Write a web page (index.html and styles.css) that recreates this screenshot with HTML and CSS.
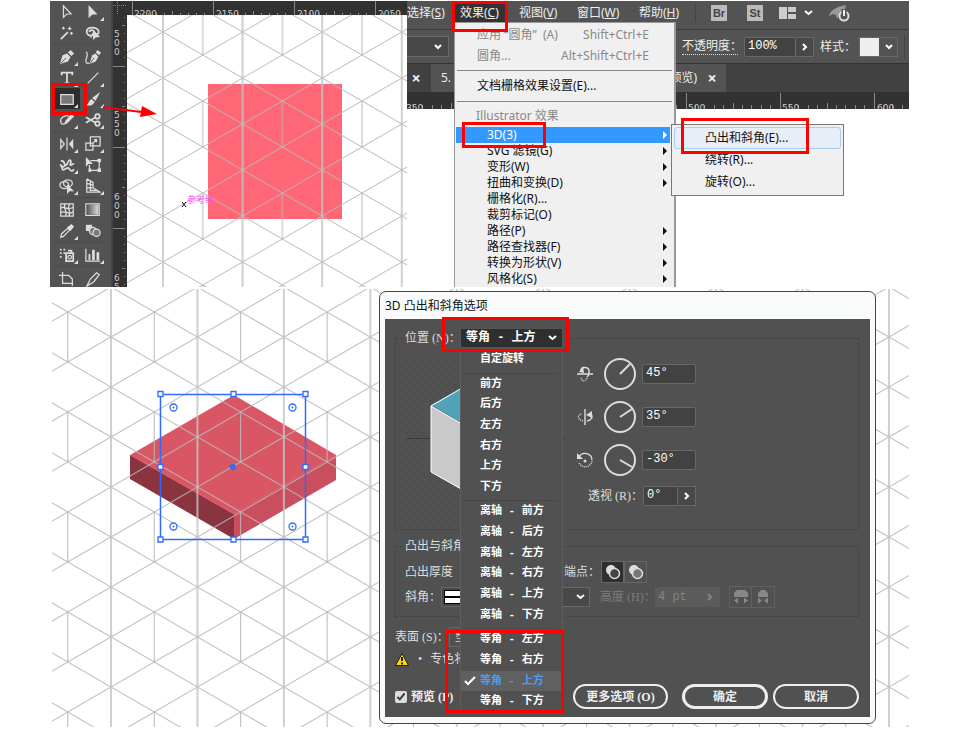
FILE: index.html
```
<!DOCTYPE html>
<html lang="zh-CN">
<head>
<meta charset="utf-8">
<title>3D 凸出和斜角</title>
<link rel="stylesheet" href="styles.css">
</head>
<body>
<main class="page">
  <section class="step step-menu">
    <div class="toolbar">
      <div class="tool-group">
        <button class="tool" aria-label="选择"><svg viewBox="0 0 18 18"><path class="line" d="M5 2v13l3.5-3.5 5-.5z"/></svg></button>
        <button class="tool more" aria-label="直接选择"><svg viewBox="0 0 18 18"><path class="fill" d="M4 1v15l4-4 6-.5z"/></svg></button>
        <button class="tool" aria-label="魔棒"><svg viewBox="0 0 18 18"><path class="thick" d="M2 16l8-8"/><path class="line" d="M12 2v4M10 4h4M5 2v3M3.500 3.500h3M14 8v3M12.500 9.500h3"/></svg></button>
        <button class="tool" aria-label="套索"><svg viewBox="0 0 18 18"><path class="thick" d="M7 12C0 12 0 3 8 3s10 7 4 8M5 8c0-3 5-3 5 0s-4 3-3 6"/><path class="fill" d="M9 5v12l3-3 5-.5z"/></svg></button>
      </div>
      <div class="tool-group">
        <button class="tool more" aria-label="钢笔"><svg viewBox="0 0 18 18"><path class="fill" d="M1 17l3-10 5-2 4 4-3 5zM10 4l3-3 4 4-3 3z"/><path class="cut" d="M2 16l6-6"/></svg></button>
        <button class="tool" aria-label="曲率"><svg viewBox="0 0 18 18"><path class="fill" d="M5 17l3-10 4-2 3 4-3 5zM12 4l2-3 4 3-2 3z"/><path class="cut" d="M6 16l4-6"/><path class="line" d="M1 3c5 3-3 10 1 13h3"/></svg></button>
        <button class="tool more" aria-label="文字"><svg viewBox="0 0 18 18"><path class="thick" d="M3 6V3h12v3M9 3v12M6 15h6"/></svg></button>
        <button class="tool more" aria-label="直线"><svg viewBox="0 0 18 18"><path class="line" d="M3 15L15 3"/></svg></button>
        <button class="tool more active" aria-label="矩形"><svg viewBox="0 0 18 18"><path class="shade" d="M2 4h14v11H2z"/><path class="line" d="M2 4h14v11H2z"/></svg></button>
        <button class="tool more" aria-label="画笔"><svg viewBox="0 0 18 18"><path class="fill" d="M17 1l-5 10-4-3zM7 9l4 3c-2 4-5 5-10 4 4-2 3-5 6-7z"/></svg></button>
        <button class="tool more" aria-label="铅笔"><svg viewBox="0 0 18 18"><path class="line" d="M7 13C2 16 0 9 4 6s6-2 7-1"/><path class="fill" d="M6 14l1-4 7-8 3 3-8 8z"/></svg></button>
        <button class="tool more" aria-label="剪刀"><svg viewBox="0 0 18 18"><circle class="thick" cx="14" cy="5" r="2.500"/><circle class="thick" cx="14" cy="13" r="2.500"/><path class="thick" d="M12 6L1 12M12 12L1 6"/></svg></button>
      </div>
      <div class="tool-group">
        <button class="tool more" aria-label="镜像"><svg viewBox="0 0 18 18"><path class="line" d="M2 4v10l4-5zM9 2v14"/><path class="fill" d="M16 3v12l-5-6z"/></svg></button>
        <button class="tool more" aria-label="比例"><svg viewBox="0 0 18 18"><path class="line" d="M6 1h11v10H6zM1 8h8v8H1zM8 9l5-5M10 4h3v3"/></svg></button>
        <button class="tool more" aria-label="变形工具"><svg viewBox="0 0 18 18"><path class="thick" d="M2 4c5 0 3 3 5 5s4-8 6-5-2 5 0 5 3-2 4-1M1 9c4 0 1 7 5 5s4-3 6 0 4 1 5 0M3 12l5-3"/></svg></button>
        <button class="tool" aria-label="自由变换"><svg viewBox="0 0 18 18"><path class="line" d="M6 4h10v11H5V9"/><path class="fill" d="M1 0v11l3-3h5zM14 2h4v4h-4zM14 13h4v4h-4zM4 13h3v4H4z"/></svg></button>
        <button class="tool more" aria-label="形状生成器"><svg viewBox="0 0 18 18"><ellipse class="line" cx="6" cy="8" rx="5" ry="4"/><ellipse class="line" cx="10" cy="6" rx="5" ry="4"/><path class="fill" d="M9 7v11l3-3h5z"/></svg></button>
        <button class="tool more" aria-label="透视网格"><svg viewBox="0 0 18 18"><path class="line" d="M2 1v15h15L9 11V5L2 1M6 4v10M2 6l7 2M2 11h7M5 14h9"/></svg></button>
      </div>
      <div class="tool-group">
        <button class="tool" aria-label="网格"><svg viewBox="0 0 18 18"><path class="line" d="M2 2h14v14H2zM2 7c5-4 6 4 14-1M2 12c5-4 8 4 14-1M7 2c-4 5 4 8 0 14M12 2c-4 6 3 9-1 14"/></svg></button>
        <button class="tool" aria-label="渐变"><svg viewBox="0 0 18 18"><defs><linearGradient id="fade"><stop offset="0" stop-color="#555"/><stop offset="1" stop-color="#ddd"/></linearGradient></defs><path class="line" d="M1 2h15v13H1z"/><path fill="url(#fade)" d="M2 3h13v11H2z"/></svg></button>
        <button class="tool more" aria-label="吸管"><svg viewBox="0 0 18 18"><path class="line" d="M2 16l1-4 7-6 2 2-7 7z"/><path class="fill" d="M9 5l5-4 3 3-4 5z"/></svg></button>
        <button class="tool" aria-label="混合"><svg viewBox="0 0 18 18"><path class="fill" d="M1 2h7v7H1z"/><circle class="disc" cx="9" cy="9" r="4"/><circle class="disc" cx="13" cy="11" r="4"/></svg></button>
      </div>
      <div class="tool-group">
        <button class="tool more" aria-label="符号喷枪"><svg viewBox="0 0 18 18"><path class="thick" d="M8 7h8v9H8zM10 4h4v3"/><circle class="line" cx="12" cy="11.500" r="2"/><path class="fill" d="M1 2h2v2H1zM5 2h2v2H5zM1 6h2v2H1zM5 6h2v2H5zM1 10h2v2H1z"/></svg></button>
        <button class="tool more" aria-label="图表"><svg viewBox="0 0 18 18"><path class="line" d="M1 2v14h16"/><path class="fill" d="M4 8h2v7H4zM8 3h3v12H8zM13 6h3v9h-3z"/></svg></button>
      </div>
      <div class="tool-group">
        <button class="tool" aria-label="画板"><svg viewBox="0 0 18 18"><path class="line" d="M4 1v13h12M0 5h11l4 4v8"/></svg></button>
        <button class="tool" aria-label="切片"><svg viewBox="0 0 18 18"><path class="line" d="M2 17l4-8 7-7 3 2-6 8z"/></svg></button>
      </div>
    </div>

    <svg class="stage" role="img" aria-label="画布">
      <defs>
        <pattern id="iso-a" x="163" y="78" width="80" height="92" patternUnits="userSpaceOnUse" patternTransform="translate(.8 0) scale(.995 1)">
          <path class="iso" d="M0 0l80 46M0 46L80 0M0 46l80 46M0 92l80-46M40 23v46"/>
          <path class="iso axis" d="M0 0v92M80 0v92"/>
        </pattern>
        <pattern id="tick-x" x="132" y="0" width="81" height="16" patternUnits="userSpaceOnUse">
          <path class="tick" d="M.500 1v15M8.500 13v3M16.500 13v3M24.500 13v3M32.500 13v3M40.500 11v5M48.500 13v3M56.500 13v3M64.500 13v3M72.500 13v3"/>
        </pattern>
        <pattern id="tick-y" x="113" y="66" width="14" height="81" patternUnits="userSpaceOnUse">
          <path class="tick" d="M0 .500h14M11 8.500h3M11 16.500h3M11 24.500h3M11 32.500h3M9 40.500h5M11 48.500h3M11 56.500h3M11 64.500h3M11 72.500h3"/>
        </pattern>
      </defs>
      <g transform="translate(-113 -1)">
        <path fill="#323232" d="M113 1h294v14H113zM113 1h14v286h-14z"/>
        <path fill="url(#tick-x)" d="M129 1h278v14H129z"/>
        <path fill="url(#tick-y)" d="M113 17h12v270h-12z"/>
        <path class="tick" stroke-dasharray="1 1" d="M117.500 1v14M113 5.500h14"/>
        <g class="ruler-text">
          <text x="134" y="17">2200</text><text x="216" y="17">2150</text><text x="297" y="17">2100</text><text x="378" y="17">2050</text>
          <text x="114" y="37">5</text><text x="114" y="46">0</text><text x="114" y="55">0</text>
          <text x="114" y="118">5</text><text x="114" y="127">5</text><text x="114" y="136">0</text>
          <text x="114" y="200">6</text><text x="114" y="209">0</text><text x="114" y="218">0</text>
          <text x="114" y="281">6</text><text x="114" y="290">5</text>
        </g>
        <path fill="#fff" d="M127 15h280v272H127z"/>
        <path fill="#ff6777" d="M208 84h134v135H208z"/>
        <path fill="url(#iso-a)" d="M127 15h280v272H127z"/>
        <path stroke="#111" fill="none" d="M182 202l4 5M186 202l-4 5"/>
        <text class="guide-text" x="187" y="203">参考线</text>
      </g>
    </svg>

    <div class="app">
      <nav class="menubar">
        <a href="#" class="m-select">选择(<u>S</u>)</a>
        <a href="#" class="m-effect">效果(<u>C</u>)</a>
        <a href="#" class="m-view">视图(<u>V</u>)</a>
        <a href="#" class="m-window">窗口(<u>W</u>)</a>
        <a href="#" class="m-help">帮助(<u>H</u>)</a>
        <span class="bar-sep"></span>
        <button class="badge">Br</button>
        <button class="badge">St</button>
        <button class="arrange" aria-label="排列文档"><svg width="34" height="12" viewBox="0 0 34 12"><path fill="#ccc" d="M0 0h8v12H0zM9 0h8v5H9zM9 7h8v5H9z"/><path class="chev" d="M26 4l3.500 3L33 4"/></svg></button>
        <button class="rocket" aria-label="GPU 性能"><svg width="22" height="18" viewBox="0 0 22 18"><path fill="#999" d="M0 12C2 5 8 3 17 1c-1 5-3 8-7 10l-2 4-1-4-3-1z"/><circle cx="15" cy="12" r="4.500" fill="#535353" stroke="#ddd" stroke-width="2"/><path stroke="#535353" stroke-width="5" d="M15 5v5"/><path stroke="#eee" stroke-width="2" d="M15 6v6"/></svg></button>
      </nav>
      <div class="controls">
        <button class="stub" aria-label="下拉"><svg width="8" height="6" viewBox="0 0 8 6"><path class="chev" d="M1 1l3 3 3-3"/></svg></button>
        <label class="dotted" for="opacity">不透明度：</label>
        <input id="opacity" class="dark-input opacity" value="100%">
        <button class="step-btn" aria-label="更多"><svg width="6" height="8" viewBox="0 0 6 8"><path class="chev" d="M1 1l3 3-3 3"/></svg></button>
        <span class="style-label">样式：</span>
        <button class="swatch" aria-label="图形样式"><i></i><svg width="8" height="6" viewBox="0 0 8 6"><path class="chev" d="M1 1l3 3 3-3"/></svg></button>
        <span class="bar-sep end"></span>
      </div>
      <div class="tabs">
        <button class="tab-close" aria-label="关闭">×</button>
        <div class="tab"><span>5.</span><span>(预览)</span><button class="tab-close" aria-label="关闭">×</button></div>
      </div>
      <svg class="app-ruler" aria-hidden="true">
        <defs><pattern id="tick-b" x="279" y="0" width="94" height="17" patternUnits="userSpaceOnUse">
          <path class="tick" d="M.500 1v16M9.500 13v4M18.500 13v4M28.500 13v4M37.500 13v4M47.500 11v6M56.500 13v4M65.500 13v4M75.500 13v4M84.500 13v4"/>
        </pattern></defs>
        <rect width="100%" height="17" fill="#323232"/>
        <rect width="100%" height="17" fill="url(#tick-b)"/>
        <g class="ruler-text"><text x="-1" y="19">350</text><text x="281" y="19">500</text><text x="375" y="19">550</text><text x="470" y="19">600</text></g>
      </svg>
    </div>

    <div class="menu">
      <div class="menu-row dim tall"><span>应用 “圆角”  (A)</span><span>Shift+Ctrl+E</span></div>
      <div class="menu-row dim tall"><span>圆角...</span><span>Alt+Shift+Ctrl+E</span></div>
      <hr>
      <div class="menu-row big">文档栅格效果设置(E)...</div>
      <hr>
      <div class="menu-row dim head">Illustrator 效果</div>
      <div class="menu-row sub on">3D(3)</div>
      <div class="menu-row sub">SVG 滤镜(G)</div>
      <div class="menu-row sub">变形(W)</div>
      <div class="menu-row sub">扭曲和变换(D)</div>
      <div class="menu-row">栅格化(R)...</div>
      <div class="menu-row">裁剪标记(O)</div>
      <div class="menu-row sub">路径(P)</div>
      <div class="menu-row sub">路径查找器(F)</div>
      <div class="menu-row sub">转换为形状(V)</div>
      <div class="menu-row sub">风格化(S)</div>
    </div>
    <div class="submenu">
      <div class="sub-row hot">凸出和斜角(E)...</div>
      <div class="sub-row">绕转(R)...</div>
      <div class="sub-row">旋转(O)...</div>
    </div>

    <span class="mark mark-tool"></span>
    <span class="mark mark-effect"></span>
    <span class="mark mark-3d"></span>
    <span class="mark mark-extrude"></span>
    <svg class="pointer" width="56" height="14" viewBox="0 0 56 14"><path stroke="red" stroke-width="2" d="M1 3l38 5"/><path fill="red" d="M40 2l15 8-17 3z"/></svg>
  </section>

  <section class="step step-dialog">
    <svg class="backdrop" role="img" aria-label="等角立体矩形">
      <defs>
        <pattern id="iso-b" x="111" y="287" width="86.440" height="100" patternUnits="userSpaceOnUse">
          <path class="iso" d="M0 0l86.440 50M0 50L86.440 0M0 50l86.440 50M0 100l86.440-50M43.220 25v50"/>
          <path class="iso axis" d="M0 0v100M86.440 0v100"/>
        </pattern>
      </defs>
      <g transform="translate(-52 -289)">
        <path fill="#d95665" d="M234 395l102 60-102 59-104-59z"/>
        <path fill="#8a343f" d="M130 455l104 59v25l-104-60z"/>
        <path fill="#c94f5e" d="M234 514l102-59v25l-102 59z"/>
        <path fill="none" stroke="#e25d6c" d="M131 455l103 59 102-59"/>
        <rect x="52" y="289" width="100%" height="438" fill="url(#iso-b)"/>
        <path fill="none" stroke="#2e6bff" stroke-width="1.500" d="M160.500 394.500h145v145h-145z"/>
        <g fill="#fff" stroke="#2e6bff" stroke-width="1.300">
          <path d="M158 391.500h5v5h-5zM231 391.500h5v5h-5zM303 391.500h5v5h-5zM158 464.500h5v5h-5zM303 464.500h5v5h-5zM158 537h5v5h-5zM231 537h5v5h-5zM303 537h5v5h-5z"/>
          <circle cx="173.500" cy="407.500" r="3.500"/><circle cx="292.500" cy="407.500" r="3.500"/><circle cx="173.500" cy="526.500" r="3.500"/><circle cx="292.500" cy="526.500" r="3.500"/>
        </g>
        <g fill="#2e6bff"><circle cx="173.500" cy="407.500" r="1"/><circle cx="292.500" cy="407.500" r="1"/><circle cx="173.500" cy="526.500" r="1"/><circle cx="292.500" cy="526.500" r="1"/><circle cx="233" cy="467" r="3"/></g>
      </g>
    </svg>

    <form class="dialog">
      <h1>3D 凸出和斜角选项</h1>
      <div class="dialog-body">
        <fieldset class="position">
          <legend><label for="preset">位置 (N)：</label><span class="preset-box"><select id="preset"><option>等角 - 上方</option></select><svg width="9" height="6" viewBox="0 0 9 6"><path class="chev" d="M1 1l3.500 3L8 1"/></svg></span></legend>
          <svg class="preview" viewBox="0 0 160 166" role="img" aria-label="预览立方体">
            <defs><pattern id="dots" x="1" y="5" width="8" height="8" patternUnits="userSpaceOnUse"><path fill="#363636" d="M0 0h1v1H0z"/></pattern></defs>
            <path fill="url(#dots)" d="M0 5h160v161H0z"/>
            <path stroke="#3a3a3a" d="M2 83.500h158"/>
            <path fill="#53a3b8" d="M26 50l57-32 57 32-57 33z"/>
            <path fill="#c9c9c9" d="M26 51l57 33v66l-57-33z"/>
            <path fill="none" stroke="#fff" d="M83 18L26 51v66l57 32M26 51l57 33"/>
          </svg>
          <div class="rotate">
            <div class="rotate-row">
              <svg width="16" height="18" viewBox="0 0 16 18"><path class="line" d="M0 9h16M4 5c1-4 8-3 8 1s0 4-2 6"/><path class="fill" d="M2 7l4-6 1 7z"/><path class="line dash" d="M10 13c-2 5-6 3-6-1"/></svg>
              <svg class="dial" viewBox="0 0 32 32"><circle cx="16" cy="16" r="15"/><path d="M16 16l10-10"/></svg>
              <input class="dark-input" aria-label="绕 X 轴旋转" value="45°">
            </div>
            <div class="rotate-row">
              <svg width="16" height="18" viewBox="0 0 16 18"><path class="line" d="M8 1v16M10 13c5-1 6-4 4-7"/><path class="fill" d="M9 7l6-4v7z"/><path class="line dash" d="M6 13C-1 11 1 6 5 6"/></svg>
              <svg class="dial" viewBox="0 0 32 32"><circle cx="16" cy="16" r="15"/><path d="M16 16l12-8"/></svg>
              <input class="dark-input" aria-label="绕 Y 轴旋转" value="35°">
            </div>
            <div class="rotate-row">
              <svg width="16" height="18" viewBox="0 0 16 18"><path class="line" d="M2 6c3-6 13-4 13 3"/><path class="fill" d="M0 2v6h6z"/><path class="line dash" d="M15 10c-2 8-12 7-13 1"/><circle class="fill" cx="8" cy="10" r="1.500"/></svg>
              <svg class="dial" viewBox="0 0 32 32"><circle cx="16" cy="16" r="15"/><path d="M16 16l12 7"/></svg>
              <input class="dark-input" aria-label="绕 Z 轴旋转" value="-30°">
            </div>
            <div class="rotate-row persp">
              <label for="persp">透视 (R)：</label>
              <input id="persp" class="dark-input" value="0°"><button type="button" class="step-btn" aria-label="更多"><svg width="6" height="8" viewBox="0 0 6 8"><path class="chev" d="M1 1l3 3-3 3"/></svg></button>
            </div>
          </div>
        </fieldset>

        <fieldset class="bevel">
          <legend>凸出与斜角</legend>
          <div class="field-row">
            <span class="depth">凸出厚度</span>
            <span class="cap-label">端点：</span>
            <button type="button" class="cap on" aria-label="实心"><svg width="16" height="16" viewBox="0 0 16 16"><circle cx="6" cy="6" r="5" fill="#ddd"/><circle cx="9.500" cy="9.500" r="5" fill="#444" stroke="#ddd" stroke-width="1.500"/></svg></button><button type="button" class="cap" aria-label="空心"><svg width="16" height="16" viewBox="0 0 16 16"><circle cx="6" cy="6" r="5" fill="#ddd"/><circle cx="9.500" cy="9.500" r="5" fill="#777" stroke="#ddd" stroke-width="1.500"/></svg></button>
          </div>
          <div class="field-row">
            <span class="bevel-label">斜角：</span>
            <button type="button" class="bevel-select" aria-label="斜角形状"><i></i><svg width="9" height="6" viewBox="0 0 9 6"><path class="chev" d="M1 1l3.500 3L8 1"/></svg></button>
            <label class="off height-label" for="height">高度 (H)：</label>
            <span class="height-box"><input id="height" disabled value="4 pt"><svg width="6" height="8" viewBox="0 0 6 8"><path class="chev" d="M1 1l3 3-3 3"/></svg></span>
            <button type="button" disabled class="extent first" aria-label="斜角外扩"><svg width="16" height="15" viewBox="0 0 16 15"><path fill="#888" d="M1 8V4l3-3h8l3 3v4zM1 11.500l4-3v6zM15 11.500l-4-3v6z"/></svg></button><button type="button" disabled class="extent" aria-label="斜角内缩"><svg width="16" height="15" viewBox="0 0 16 15"><path fill="#888" d="M3 8V4l3-3h4l3 3v4zM7 11.500l-4-3v6zM9 11.500l4-3v6z"/></svg></button>
          </div>
        </fieldset>

        <div class="surface"><span>表面 (S)：</span><button type="button" class="surface-select">塑料</button></div>
        <div class="warning"><svg width="14" height="13" viewBox="0 0 14 13"><path fill="#ffd800" stroke="#222" d="M7 .500l6.500 12H.500z"/><path stroke="#222" stroke-width="2" d="M7 4v4M7 9.500v2"/></svg><span class="dot">•</span><span>专色将</span></div>
        <div class="footer">
          <input type="checkbox" id="pv" checked><label for="pv">预览 (P)</label>
          <button type="button" class="pill wide">更多选项 (O)</button>
          <button type="button" class="pill main">确定</button>
          <button type="button" class="pill">取消</button>
        </div>
      </div>
    </form>

    <ul class="options" role="listbox">
      <li>自定旋转</li>
      <li class="rule"></li>
      <li>前方</li><li>后方</li><li>左方</li><li>右方</li><li>上方</li><li>下方</li>
      <li class="rule"></li>
      <li>离轴 - 前方</li><li>离轴 - 后方</li><li>离轴 - 左方</li><li>离轴 - 右方</li><li>离轴 - 上方</li><li>离轴 - 下方</li>
      <li class="rule"></li>
      <li>等角 - 左方</li><li>等角 - 右方</li>
      <li class="chosen"><svg width="12" height="10" viewBox="0 0 12 10"><path fill="none" stroke="#fff" stroke-width="2" d="M1 5l3 3 7-7"/></svg>等角 - 上方</li>
      <li>等角 - 下方</li>
    </ul>
    <span class="mark mark-preset"></span>
    <span class="mark mark-iso"></span>
  </section>
</main>
</body>
</html>
```
FILE: styles.css
```
* { box-sizing: border-box; }
body { margin: 0; background: #fff; font: 12px/16px "Noto Sans", "Noto Sans CJK SC", sans-serif; color: #111; }
button, input, select { font: inherit; color: inherit; margin: 0; padding: 0; border: 0; background: none; border-radius: 0; }
button { display: inline-flex; align-items: center; justify-content: center; }
svg { display: block; flex: none; }
a { color: inherit; text-decoration: none; }
.page { padding: 1px 51px 0 50px; }
.step { position: relative; }
.step-menu { display: flex; height: 286px; overflow: hidden; }

.line { fill: none; stroke: #ddd; stroke-width: 1.4; }
.thick { fill: none; stroke: #ddd; stroke-width: 2; }
.fill { fill: #ddd; }
.shade { fill: #777; }
.disc { fill: #777; stroke: #ddd; stroke-width: 1.4; }
.cut { fill: none; stroke: #535353; }
.dash { stroke-dasharray: 1 1; }
.chev { fill: none; stroke: #fff; stroke-width: 2; }
.iso { fill: none; stroke: #b8b8b8; stroke-width: 1; }
.iso.axis { stroke: #c4c4c4; stroke-width: 1.6; }
.tick { fill: none; stroke: #888; }
.ruler-text { font: 9px "DejaVu Sans", sans-serif; fill: #ccc; }
.guide-text { font: 9px "Noto Sans CJK SC", sans-serif; fill: #ff4dff; }

.toolbar { flex: none; width: 63px; padding-left: 4px; background: #535353; border-right: 2px solid #434343; }
.tool-group { display: grid; grid-template-columns: 26px 26px; grid-auto-rows: 21px; width: 52px; }
.tool-group + .tool-group { margin-top: 1px; padding-top: 1px; border-top: 1px dotted #444; }
.tool { position: relative; }
.tool svg { width: 16px; height: 16px; }
.tool.more::after { content: ""; position: absolute; right: 2px; bottom: 1px; border: 2px solid transparent; border-right-color: #ddd; border-bottom-color: #ddd; }
.tool.active { background: #2d2d2d; }
.stage { width: 294px; height: 286px; }

.app { flex: 1; min-width: 0; height: 108px; color: #eee; background: #535353; overflow: hidden; }
.menubar { display: flex; align-items: center; height: 28px; white-space: nowrap; padding-bottom: 4px; }
.menubar a { flex: none; line-height: 20px; }
.m-select { width: 48px; }
.m-effect { width: 53px; padding-left: 5px; background: #333; }
.m-view { margin-left: 11px; width: 58px; }
.m-window { width: 62px; }
.m-help { width: 55px; }
.bar-sep { width: 1px; height: 18px; background: #444; margin-left: 1px; }
.badge { width: 16px; height: 16px; margin-left: 20px; background: #bbb; color: #444; font: bold 11px "Liberation Sans", sans-serif; }
.bar-sep + .badge { margin-left: 15px; }
.arrange { margin-left: 16px; }
.rocket { margin-left: 16px; }
.controls { display: flex; align-items: center; height: 34px; border-top: 1px solid #3c3c3c; }
.stub { width: 42px; height: 21px; padding-right: 6px; justify-content: flex-end; border: 1px solid #6a6a6a; border-left: 0; background: #484848; }
.dotted { margin-left: 233px; width: 56px; border-bottom: 1px dotted #ddd; white-space: nowrap; }
.dark-input { height: 20px; background: #424242; border: 1px solid #686868; border-radius: 2px; color: #fff; font: 12px/16px "Liberation Mono", monospace; padding: 0 0 2px 3px; }
.opacity { width: 52px; margin-left: 6px; }
.step-btn { width: 18px; height: 20px; border: 1px solid #686868; border-left: 0; background: #484848; }
.style-label { margin-left: 6px; width: 39px; white-space: nowrap; }
.swatch { width: 39px; height: 20px; border: 1px solid #686868; justify-content: flex-start; gap: 6px; }
.swatch i { width: 19px; height: 18px; background: #eee; }
.bar-sep.end { margin-left: 6px; height: 24px; }
.tabs { display: flex; height: 29px; background: #414141; border-top: 1px solid #333; }
.tab-close { width: 18px; flex: none; font-size: 16px; font-weight: bold; line-height: 16px; }
.tab { display: flex; align-items: center; justify-content: space-between; width: 295px; margin-left: 6px; padding: 0 5px 0 10px; background: #535353; }
.tab span:nth-child(2) { margin-left: auto; margin-right: 6px; }
.app-ruler { width: 100%; height: 17px; }

.menu { position: absolute; left: 404px; top: 21px; width: 222px; height: 270px; padding-top: 1px; background: #f0f0f0; border: 1px solid #999; border-right-width: 2px; }
.menu-row { position: relative; margin: 0 4px 0 1px; padding-left: 31px; height: 16px; line-height: 16px; white-space: nowrap; }
.menu-row.tall { display: flex; justify-content: space-between; height: 21px; line-height: 21px; padding: 0 21px 0 21px; white-space: pre; }
.menu-row.big { height: 22px; line-height: 22px; padding-left: 21px; }
.menu-row.head { height: 21px; line-height: 20px; padding-left: 20px; }
.menu-row.dim { color: #888; }
.menu hr { margin: 4px 2px; border: 0; border-top: 1px solid #888; }
.menu-row.sub::after { content: ""; position: absolute; right: 3px; top: 4px; border: 4px solid transparent; border-left-color: #111; border-right: 0; }
.menu-row.on { background: #3399ff; color: #fff; }
.menu-row.sub.on::after { border-left-color: #fff; }
.submenu { position: absolute; left: 621px; top: 123px; width: 173px; padding: 2px; background: #f0f0f0; border: 1px solid #777; }
.sub-row { height: 22px; line-height: 20px; padding-left: 30px; border: 1px solid transparent; }
.sub-row.hot { border-color: #a8cdf0; border-radius: 3px; background: #e8eef7; }

.mark { position: absolute; border: 3px solid #f00; }
.mark-tool { left: 2px; top: 82px; width: 35px; height: 32px; }
.mark-effect { left: 402px; top: 0; width: 56px; height: 31px; }
.mark-3d { left: 412px; top: 121px; width: 84px; height: 26px; }
.mark-extrude { left: 631px; top: 117px; width: 128px; height: 36px; }
.pointer { position: absolute; left: 52px; top: 103px; }

.step-dialog { margin-top: 2px; height: 438px; }
.backdrop { position: absolute; left: 2px; top: 0; width: calc(100% - 2px); height: 438px; }
.dialog { position: relative; margin: 0 33px 0 329px; top: 2px; padding: 0 5px 6px; background: #f9fbfb; border: 1px solid #444; border-radius: 7px; }
.dialog h1 { margin: 0; font-size: 12px; font-weight: normal; line-height: 27px; color: #111; }
.dialog-body { padding: 9px 11px 8px 10px; background: #515151; color: #ddd; font: 12px/16px "Liberation Serif", "Noto Sans CJK SC", serif; }
fieldset { min-width: 0; margin: 0; padding: 0 9px; border: 1px dotted #3f3f3f; }
legend { padding: 0; }
.position legend { display: flex; align-items: center; height: 20px; }
.position legend label { width: 55px; line-height: 20px; white-space: nowrap; }
.preset-box { display: flex; align-items: center; width: 103px; height: 20px; padding: 0 5px; background: #2f2f2f; border: 1px solid #555; }
.preset-box select { flex: 1; width: 70px; appearance: none; color: #fff; font: bold 12px/18px "Liberation Mono", "Noto Sans CJK SC", monospace; }
.position { display: flex; height: 202px; }
.preview { width: 160px; height: 166px; margin-top: 7px; }
.rotate { margin: 4px 0 0 12px; }
.rotate-row { display: flex; align-items: center; height: 43px; }
.dial { width: 32px; height: 32px; margin: 0 6px 0 11px; fill: none; stroke: #ddd; stroke-width: 2; }
.rotate-row .dark-input { width: 54px; }
.rotate-row.persp { height: 30px; padding-left: 11px; }
.persp label { width: 55px; white-space: nowrap; }
.rotate-row.persp .dark-input { width: 35px; }
.bevel { margin-top: 8px; padding-top: 5px; padding-bottom: 7px; }
.bevel legend { width: 70px; }
.field-row { display: flex; align-items: center; height: 25px; white-space: nowrap; }
.depth { width: 159px; }
.cap-label { width: 37px; }
.cap { width: 23px; height: 22px; border: 1px solid #666; }
.cap.on { background: #2f2f2f; }
.bevel-label { width: 36px; }
.bevel-select { width: 149px; height: 20px; padding: 0 4px 0 2px; justify-content: space-between; border: 1px solid #686868; background: #484848; }
.bevel-select i { width: 60px; height: 14px; border: 1px solid #000; background: linear-gradient(#fff 5px, #000 5px, #000 7px, #fff 7px); }
.off { color: #7c7c7c; }
.height-label { margin-left: 10px; width: 55px; }
.height-box { display: flex; align-items: center; width: 65px; height: 20px; padding: 0 7px 0 3px; background: #5b5b5b; }
.height-box input { flex: 1; width: 40px; color: #858585; font-family: "Liberation Mono", monospace; }
.height-box .chev { stroke: #858585; }
.extent { width: 23px; height: 22px; border: 1px solid #616161; border-left: 0; }
.extent.first { margin-left: 9px; border-left: 1px solid #616161; }
.surface { display: flex; align-items: center; height: 20px; margin-top: 10px; }
.surface span { width: 54px; white-space: nowrap; }
.surface-select { width: 90px; height: 20px; border: 1px solid #686868; justify-content: flex-start; padding-left: 5px; }
.warning { display: flex; align-items: center; height: 20px; margin-top: 2px; }
.dot { margin: 0 8px 0 9px; }
.footer { display: flex; align-items: center; margin-top: 15px; font-weight: bold; color: #eee; }
.footer input { width: 12px; height: 12px; accent-color: #ddd; }
.footer label { margin: 0 auto 0 4px; }
.pill { width: 86px; height: 25px; margin-left: 5px; border: 2px solid #eee; border-radius: 13px; }
.pill.wide { width: 95px; }
.pill.main { margin-left: 14px; border-width: 3px; }

.options { position: absolute; left: 410px; top: 60px; width: 103px; height: 364px; margin: 0; padding: 0; display: flex; flex-direction: column; list-style: none; background: #515151; border: 1px solid #5e5e5e; border-top: 0; color: #fff; font: bold 11px/20px "Liberation Mono", "Noto Sans CJK SC", monospace; }
.options li { position: relative; flex: 1; padding-left: 19px; white-space: nowrap; }
.options .rule { flex: none; height: 4px; margin: 0 4px; border-bottom: 1px dotted #3c3c3c; }
.options .chosen { background: #606060; color: #4a9df0; }
.chosen svg { position: absolute; left: 3px; top: 5px; }
.mark-preset { left: 392px; top: 28px; width: 127px; height: 35px; }
.mark-iso { left: 395px; top: 341px; width: 119px; height: 83px; }
```
